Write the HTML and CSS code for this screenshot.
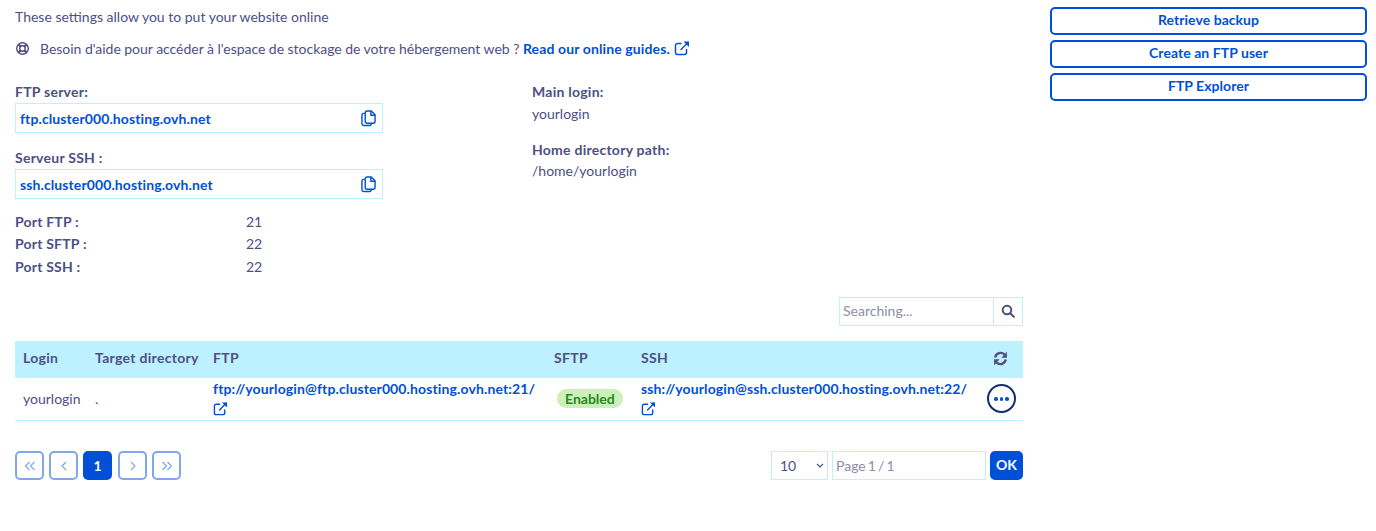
FILE: index.html
```html
<!DOCTYPE html>
<html lang="en">
<head>
<meta charset="utf-8">
<title>FTP - SSH</title>
<link rel="stylesheet" href="styles.css">
</head>
<body>
<div class="page">
  <main class="main">
    <p class="intro">These settings allow you to put your website online</p>
    <p class="help">
      <svg class="icon-help" viewBox="0 0 16 16"><circle cx="8" cy="8" r="6.2"/><circle cx="8" cy="8" r="2.9"/><path d="M3.6 3.6l2.3 2.3M12.4 3.6l-2.3 2.3M3.6 12.4l2.3-2.3M12.4 12.4l-2.3-2.3" class="thick"/></svg>
      <span class="help-text">Besoin d'aide pour accéder à l'espace de stockage de votre hébergement web ? <a class="link" href="#">Read our online guides.</a></span>
      <svg class="icon-ext" viewBox="0 0 16 16"><path d="M12.5 9.500v3a2 2 0 0 1-2 2h-7a2 2 0 0 1-2-2v-7a2 2 0 0 1 2-2h3.500"/><path d="M7 9.500L14 2.500"/><path d="M9.500 1.500h5.500v5.500z" class="fill"/></svg>
    </p>
    <div class="info">
      <div class="info-left">
        <div class="label">FTP server:</div>
        <div class="copy-box"><span class="copy-text">ftp.cluster000.hosting.ovh.net</span>
          <svg class="icon-copy" viewBox="0 0 16 18"><path d="M4 3.500H2.800A1.800 1.800 0 0 0 1 5.300v9.400a1.800 1.800 0 0 0 1.800 1.800h6.400a1.800 1.800 0 0 0 1.800-1.800V14"/><path d="M4.500 3a2 2 0 0 1 2-2h4.500l4 4v7a2 2 0 0 1-2 2H6.500a2 2 0 0 1-2-2z"/><path d="M10.500 1v4.500H15"/></svg>
        </div>
        <div class="label label-next">Serveur SSH :</div>
        <div class="copy-box"><span class="copy-text">ssh.cluster000.hosting.ovh.net</span>
          <svg class="icon-copy" viewBox="0 0 16 18"><path d="M4 3.500H2.800A1.800 1.800 0 0 0 1 5.300v9.400a1.800 1.800 0 0 0 1.800 1.800h6.400a1.800 1.800 0 0 0 1.800-1.800V14"/><path d="M4.500 3a2 2 0 0 1 2-2h4.500l4 4v7a2 2 0 0 1-2 2H6.500a2 2 0 0 1-2-2z"/><path d="M10.500 1v4.500H15"/></svg>
        </div>
        <dl class="ports">
          <dt>Port FTP :</dt><dd>21</dd>
          <dt>Port SFTP :</dt><dd>22</dd>
          <dt>Port SSH :</dt><dd>22</dd>
        </dl>
      </div>
      <div class="info-right">
        <div class="label">Main login:</div>
        <div class="value">yourlogin</div>
        <div class="label label-home">Home directory path:</div>
        <div class="value value-home">/home/yourlogin</div>
      </div>
    </div>
    <div class="search-row">
      <div class="search">
        <span class="search-input">Searching...</span>
        <span class="search-btn"><svg class="icon-search" viewBox="0 0 14 14"><circle cx="6" cy="6" r="4.300"/><path d="M9.200 9.200L12.800 12.800"/></svg></span>
      </div>
    </div>
    <table class="table">
      <colgroup><col class="c1"><col class="c2"><col class="c3"><col class="c4"><col class="c5"><col class="c6"></colgroup>
      <thead>
        <tr>
          <th>Login</th><th>Target directory</th><th>FTP</th><th>SFTP</th><th>SSH</th>
          <th class="refresh"><svg class="icon-refresh" viewBox="0 0 14 14"><path d="M2 6A5.200 5.200 0 0 1 10.900 3.500"/><path d="M13 6.200V.800L7.800 6.200z" class="fill"/><path d="M12 8A5.200 5.200 0 0 1 3.100 10.500"/><path d="M1 7.800v5.400l5.200-5.400z" class="fill"/></svg></th>
        </tr>
      </thead>
      <tbody>
        <tr>
          <td>yourlogin</td><td>.</td>
          <td><a class="link" href="#">ftp://yourlogin@ftp.cluster000.hosting.ovh.net:21/</a><br>
            <svg class="icon-ext icon-ext-cell" viewBox="0 0 16 16"><path d="M12.500 9.500v3a2 2 0 0 1-2 2h-7a2 2 0 0 1-2-2v-7a2 2 0 0 1 2-2h3.500"/><path d="M7 9.500L14 2.500"/><path d="M9.500 1.500h5.500v5.500z" class="fill"/></svg></td>
          <td><span class="badge">Enabled</span></td>
          <td><a class="link" href="#">ssh://yourlogin@ssh.cluster000.hosting.ovh.net:22/</a><br>
            <svg class="icon-ext icon-ext-cell" viewBox="0 0 16 16"><path d="M12.500 9.500v3a2 2 0 0 1-2 2h-7a2 2 0 0 1-2-2v-7a2 2 0 0 1 2-2h3.500"/><path d="M7 9.500L14 2.500"/><path d="M9.500 1.500h5.500v5.500z" class="fill"/></svg></td>
          <td class="actions"><span class="more"><i></i><i></i><i></i></span></td>
        </tr>
      </tbody>
    </table>
    <div class="pager">
      <div class="pages">
        <span class="page-btn"><svg class="icon-page" viewBox="0 0 12 12"><path d="M5.500 2L1.500 6l4 4M10.500 2l-4 4 4 4"/></svg></span>
        <span class="page-btn"><svg class="icon-page" viewBox="0 0 12 12"><path d="M8 2L4 6l4 4"/></svg></span>
        <span class="page-btn current">1</span>
        <span class="page-btn gap"><svg class="icon-page" viewBox="0 0 12 12"><path d="M4 2l4 4-4 4"/></svg></span>
        <span class="page-btn"><svg class="icon-page" viewBox="0 0 12 12"><path d="M1.500 2l4 4-4 4M6.500 2l4 4-4 4"/></svg></span>
      </div>
      <div class="page-form">
        <span class="select">10<svg class="icon-chevron" viewBox="0 0 8 5"><path d="M1 1l3 3 3-3"/></svg></span>
        <span class="page-input">Page 1 / 1</span>
        <span class="ok">OK</span>
      </div>
    </div>
  </main>
  <aside class="side">
    <a class="side-btn" href="#">Retrieve backup</a>
    <a class="side-btn" href="#">Create an FTP user</a>
    <a class="side-btn" href="#">FTP Explorer</a>
  </aside>
</div>
</body>
</html>
```
FILE: styles.css
```css
* { box-sizing: border-box; }
body {
  margin: 0;
  font-family: "Lato", "Liberation Sans", sans-serif;
  font-size: 14px;
  color: #4d4f85;
  background: #fff;
}
.page {
  display: grid;
  grid-template-columns: 1008px 317px;
  column-gap: 27px;
  padding: 7px 0 0 15px;
}
.main { min-width: 0; }
p { margin: 0; }
.intro { line-height: 20px; }
.help {
  display: flex;
  align-items: center;
  height: 20px;
  margin-top: 11px;
}
.icon-help { width: 15px; height: 15px; margin-right: 10px; fill: none; stroke: #4d4f85; stroke-width: 1.5; flex: none; }
.icon-help .thick { stroke-width: 2.4; }
.help-text { white-space: nowrap; letter-spacing: -0.03px; }
.link { color: #0050d7; font-weight: 700; text-decoration: none; letter-spacing: 0.12px; }
.icon-ext { width: 16px; height: 16px; margin-left: 4px; margin-top: -1px; fill: none; stroke: #0050d7; stroke-width: 1.500; stroke-linecap: round; }
.icon-ext .fill { fill: #0050d7; stroke: none; }
.icon-ext-cell { width: 15px; height: 15px; margin: 2px 0 0; display: inline-block; vertical-align: top; }
.info {
  display: grid;
  grid-template-columns: 517px 1fr;
  margin-top: 24px;
}
.label { font-weight: 700; line-height: 20px; letter-spacing: 0.25px; }
.label-next { margin-top: 15px; }
.label-home { margin-top: 16px; }
.value { line-height: 20px; margin-top: 2px; }
.value-home { margin-top: 1px; }
.copy-box {
  display: flex;
  align-items: center;
  justify-content: space-between;
  width: 368px;
  height: 30px;
  margin-top: 1px;
  padding: 0 6px 0 4px;
  border: 1px solid #bef1ff;
}
.copy-text { color: #0050d7; font-weight: 700; letter-spacing: 0.1px; }
.icon-copy { width: 15px; height: 17px; fill: none; stroke: #0050d7; stroke-width: 1.500; stroke-linejoin: round; }
.ports {
  display: grid;
  grid-template-columns: 231px 1fr;
  grid-auto-rows: 22.500px;
  align-items: center;
  margin: 11px 0 0;
}
.ports dt { font-weight: 700; letter-spacing: 0.2px; }
.ports dd { margin: 0; }
.search-row { display: flex; justify-content: flex-end; margin-top: 19px; }
.search { display: flex; width: 184px; height: 29px; border: 1px solid #bef1ff; }
.search-input { flex: 1; padding-left: 3px; line-height: 26px; color: #8b8fa8; border-right: 1px solid #bef1ff; }
.search-btn { width: 28px; display: flex; align-items: center; justify-content: center; }
.icon-search { width: 14px; height: 14px; fill: none; stroke: #4d4f85; stroke-width: 2; stroke-linecap: round; }
.table { width: 1008px; margin-top: 15px; border-collapse: collapse; table-layout: fixed; }
.c1 { width: 72px; }
.c2 { width: 118px; }
.c3 { width: 341px; }
.c4 { width: 87px; }
.c5 { width: 346px; }
.c6 { width: 44px; }
th {
  height: 37px;
  padding: 0 8px 4px;
  background: #bef1ff;
  text-align: left;
  font-weight: 700;
  white-space: nowrap;
  letter-spacing: 0.3px;
}
td {
  height: 43px;
  padding: 0 8px;
  border-bottom: 1px solid #bef1ff;
  line-height: 21px;
  white-space: nowrap;
}
.refresh { text-align: right; padding-right: 15px; }
.icon-refresh { width: 15px; height: 15px; display: inline-block; vertical-align: middle; fill: none; stroke: #4d4f85; stroke-width: 2.200; }
.icon-refresh .fill { fill: #4d4f85; stroke: none; }
.badge {
  display: inline-block;
  margin-left: 3px;
  padding: 0 8px;
  height: 19px;
  line-height: 19px;
  border-radius: 10px;
  background: #cdefb9;
  color: #1f8a24;
  font-weight: 700;
}
.actions { padding: 0; }
.more {
  display: flex;
  align-items: center;
  justify-content: center;
  gap: 2px;
  width: 29px;
  height: 29px;
  margin-left: 8px;
  border: 2px solid #122d72;
  border-radius: 50%;
}
.more i { width: 3.500px; height: 3.500px; border-radius: 50%; background: #0050d7; }
.pager { display: flex; justify-content: space-between; margin-top: 30px; }
.pages { display: flex; gap: 5px; }
.page-btn {
  width: 29px;
  height: 29px;
  display: flex;
  align-items: center;
  justify-content: center;
  border: 2px solid #80a7eb;
  border-radius: 5px;
  color: #80a7eb;
}
.icon-page { width: 12px; height: 12px; fill: none; stroke: #80a7eb; stroke-width: 1.200; }
.page-btn.current { background: #0050d7; border-color: #0050d7; color: #fff; font-weight: 700; }
.page-btn.gap { margin-left: 1px; }
.page-form { display: flex; gap: 4px; }
.select {
  display: flex;
  align-items: center;
  justify-content: space-between;
  width: 57px;
  height: 29px;
  padding: 0 3px 0 8px;
  border: 1px solid #bef1ff;
}
.icon-chevron { width: 8px; height: 5px; fill: none; stroke: #4d4f85; stroke-width: 1.200; }
.page-input { width: 154px; height: 29px; padding-left: 3px; line-height: 27px; border: 1px solid #bef1ff; color: #8b8fa8; word-spacing: -1.500px; }
.ok { width: 33px; height: 29px; border-radius: 5px; background: #0050d7; color: #fff; font-weight: 700; text-align: center; line-height: 28px; }
.side { display: flex; flex-direction: column; gap: 5px; }
.side-btn {
  display: block;
  height: 28px;
  border: 2px solid #0050d7;
  border-radius: 5px;
  color: #0050d7;
  font-weight: 700;
  text-align: center;
  line-height: 22px;
  text-decoration: none;
  letter-spacing: 0.05px;
}
```
